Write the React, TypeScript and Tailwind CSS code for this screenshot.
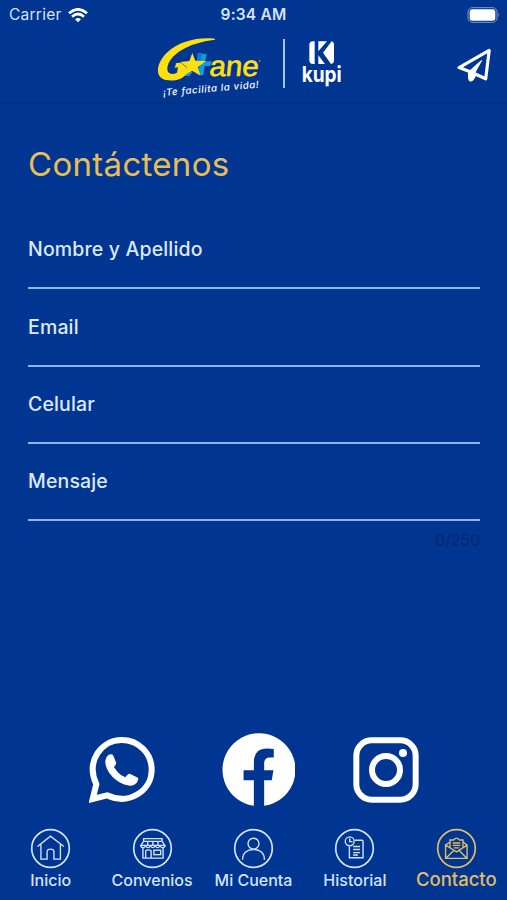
import { useState } from "react";
import type { ReactNode } from "react";
import clsx from "clsx";

const StatusBar = () => (
  <div className="grid h-[30px] grid-cols-3 items-center px-[9px] text-[15.5px] leading-none text-[#d5e3fa]">
    <div className="flex items-center gap-[6px]">
      <span className="tracking-[0.25px]">Carrier</span>
      <svg viewBox="0 0 60 45" className="h-[15px] w-[20px]" fill="none" stroke="#fff" strokeWidth="8">
        <path d="M3 16Q30-8 57 16" />
        <path d="M12 26Q30 10 48 26" />
        <path d="M21 34Q30 26 39 34L30 43Z" fill="#fff" stroke="none" />
      </svg>
    </div>
    <span className="text-center font-semibold tracking-[0.2px] whitespace-nowrap">9:34 AM</span>
    <svg viewBox="0 0 99 48" className="mr-[-2px] h-[16px] w-[33px] justify-self-end" fill="none">
      <rect x="3" y="2" width="87" height="44" rx="13" stroke="#7d9bd0" strokeWidth="3" />
      <rect x="8" y="7" width="77" height="34" rx="8" fill="#fff" />
      <path d="M94 17Q99 24 94 31Z" fill="#7d9bd0" />
    </svg>
  </div>
);

const GaneLogo = () => (
  <svg viewBox="0 0 360 219" className="h-[73px] w-[120px]">
    <path d="M143 69H157L153 132H137Z" fill="#087ccd" />
    <path d="M156 72H170L166 94H185L181 108H164L160 136H143Z" fill="#1799dd" />
    <path d="M109 118L101 138H117L128 126Z" fill="#1799dd" />
    <path
      d="M195 26C146 20 88 33 53 66C17 99 13 143 48 150C72 154 95 148 104 137L111 113L92 98L79 99L74 113L84 112L81 128C66 136 51 132 52 115C55 76 113 38 195 29Z"
      fill="#ffdf12"
    />
    <path d="M127 69L136 92L168 93L143 111L151 136L126 122L101 137L111 112L91 96L118 93Z" fill="#ffdf12" />
    <g transform="translate(176 139) skewX(-6)">
      <text fontFamily="'Liberation Sans', sans-serif" fontSize="86" textLength="148" lengthAdjust="spacingAndGlyphs" fill="#ffdf12" stroke="#ffdf12" strokeWidth="2">
        ane
      </text>
    </g>
    <circle cx="329" cy="93" r="2" fill="#ffdf12" />
    <text
      x="40"
      y="198"
      transform="rotate(-5 40 198)"
      fontFamily="Inter, sans-serif"
      fontStyle="italic"
      fontWeight="500"
      fontSize="29"
      textLength="288"
      lengthAdjust="spacing"
      fill="#fff"
    >
      ¡Te facilita la vida!
    </text>
  </svg>
);

const KupiLogo = () => (
  <svg viewBox="0 0 129 165" className="h-[55px] w-[43px]">
    <path d="M36 4H41V72H36Q25 72 25 61V15Q25 4 36 4Z" fill="#fff" />
    <path d="M52 4H78L52 34ZM52 46L72 72H52Z" fill="#fff" />
    <path d="M90 4Q99 5 99 14V61Q99 71 90 72L66 38L92 4Z" fill="#fff" />
    <g transform="translate(2 125) scale(1 1.12)">
      <text fontFamily="Inter, sans-serif" fontWeight="700" fontSize="59" textLength="120" lengthAdjust="spacingAndGlyphs" fill="#fff">
        kupi
      </text>
    </g>
  </svg>
);

const SendIcon = () => (
  <svg viewBox="0 0 100 100" className="h-[35px] w-[35px]" fill="none" stroke="#fff" strokeWidth="9" strokeLinejoin="round" strokeLinecap="round">
    <path d="M92 7L6 56L36 67L82 88Z" />
    <path d="M36 67V86Q38 96 44 88L52 75" />
    <path d="M70 36L36 66L38 89L50 72Z" fill="#fff" strokeWidth="3" />
  </svg>
);

const WhatsappIcon = () => (
  <svg viewBox="59 51 198 198" className="h-[66px] w-[66px]" fill="none" stroke="#fff">
    <path d="M70 237L81 193C49 125 95 60 157 60C207 60 247 99 247 149C247 212 179 257 113 226Z" strokeWidth="18" />
    <path
      d="M124 103C117 103 108 113 108 126C109 161 151 197 184 197C197 196 206 188 207 174L183 162C178 160 175 164 168 172C153 166 142 155 134 141C139 134 142 132 140 127L132 107C130 103 127 103 124 103Z"
      fill="#fff"
      stroke="none"
    />
  </svg>
);

const FacebookIcon = () => (
  <svg viewBox="36 39 220 222" className="h-[74px] w-[73px]">
    <path
      d="M132 258A110 110 0 1 1 163 258V181H186L191 151H163V130Q163 112 181 112H192V87Q183 85 172 85Q132 85 132 128V151H101V181H132Z"
      fill="#fff"
    />
  </svg>
);

const InstagramIcon = () => (
  <svg viewBox="429 50 198 198" className="h-[66px] w-[66px]" fill="none" stroke="#fff" strokeWidth="18">
    <rect x="439" y="60" width="178" height="178" rx="46" />
    <circle cx="528" cy="149" r="42" />
    <circle cx="579" cy="98" r="12" fill="#fff" stroke="none" />
  </svg>
);

// dibujos dentro del círculo del menú, en un lienzo de 120x120
const navItems: { label: string; icon: ReactNode }[] = [
  {
    label: "Inicio",
    icon: <path d="M22 54L60 24L99 54M32 48V91H50V70Q50 62 60 62Q70 62 70 70V91H89V48" />,
  },
  {
    label: "Convenios",
    icon: (
      <>
        <path d="M34 31H88V39H34ZM34 39L26 51H96L88 39M26 51V54Q33 62 40 53Q47 62 54 53Q61 62 68 53Q75 62 82 53Q89 62 96 54V51" />
        <path d="M32 59V88H91V59M40 88V69Q40 64 48 64Q56 64 56 69V88" />
        <rect x="64" y="65" width="20" height="13" />
        <path d="M46 39V51M61 39V51M76 39V51" />
      </>
    ),
  },
  {
    label: "Mi Cuenta",
    icon: (
      <>
        <circle cx="60" cy="46" r="16" />
        <path d="M28 93C28 73 42 63 60 63C79 63 92 73 92 93" />
      </>
    ),
  },
  {
    label: "Historial",
    icon: (
      <>
        <path d="M61 36H82Q85 36 85 40V87H45V54" />
        <circle cx="46" cy="39" r="13" />
        <path d="M46 30V40H54M56 54H76M56 63H76M56 72H76M56 79H70" />
      </>
    ),
  },
  {
    label: "Contacto",
    icon: (
      <>
        <path d="M28 50V89H91V50L79 41M41 41L28 50L60 70L91 50M28 89L52 66M91 89L68 66" />
        <path d="M41 57V35H52Q60 24 68 35H79V57M49 44H71M49 51H71M52 58H68" />
      </>
    ),
  },
];

const fields = ["Nombre y Apellido", "Email", "Celular", "Mensaje"];

export default function App() {
  const [active, setActive] = useState("Contacto");

  return (
    <div className="flex h-[900px] w-[507px] flex-col overflow-hidden bg-[#003592] font-[Inter,sans-serif]">
      <StatusBar />

      {/* Encabezado */}
      <header className="flex h-[74px] items-start border-b-2 border-[#00307f]/70 pr-[15px] pl-[150px]">
        <GaneLogo />
        <div className="mt-[9px] ml-[13px] h-[49px] w-[2px] bg-[#a9c2ec]" />
        <div className="mt-[10px] ml-[16px]">
          <KupiLogo />
        </div>
        <button className="mt-[18px] ml-auto" aria-label="Enviar">
          <SendIcon />
        </button>
      </header>

      {/* Formulario */}
      <main className="flex-1 px-[27px] pt-[40px] pl-[28px]">
        <h1 className="text-[33px] leading-[40px] tracking-[0.3px] text-[#e6be57]">Contáctenos</h1>
        <form className="mt-[28px]">
          {fields.map((field) => (
            <div key={field} className="flex h-[77.3px] flex-col justify-end border-b-2 border-[#8fb4ee] pb-[26px]">
              <label className="text-[19.5px] leading-[24px] font-[450] tracking-[0.15px] text-[#dce8fb]">{field}</label>
            </div>
          ))}
          <div className="mt-[9px] text-right text-[16px] leading-[20px] tracking-[-0.1px] text-[#002870]">0/250</div>
        </form>
      </main>

      {/* Redes sociales */}
      <div className="flex h-[74px] items-center pl-[89px]">
        <WhatsappIcon />
        <div className="ml-[67px]">
          <FacebookIcon />
        </div>
        <div className="ml-[58px]">
          <InstagramIcon />
        </div>
      </div>

      {/* Menú inferior */}
      <nav className="grid h-[93px] grid-cols-5 pt-[21px]">
        {navItems.map(({ label, icon }) => (
          <button
            key={label}
            onClick={() => setActive(label)}
            className={clsx("flex flex-col items-center", active === label ? "text-[#e2bd62]" : "text-[#d3e3fb]")}
          >
            <svg viewBox="0 0 120 120" className="h-[41px] w-[41px]" fill="none" stroke="currentColor" strokeWidth="4">
              <circle cx="60" cy="60" r="55" strokeWidth="5" />
              {icon}
            </svg>
            <span
              className={clsx(
                "leading-[20px] font-[450] whitespace-nowrap",
                active === label ? "text-[18.5px]" : "mt-px text-[16px]",
              )}
            >
              {label}
            </span>
          </button>
        ))}
      </nav>
    </div>
  );
}
